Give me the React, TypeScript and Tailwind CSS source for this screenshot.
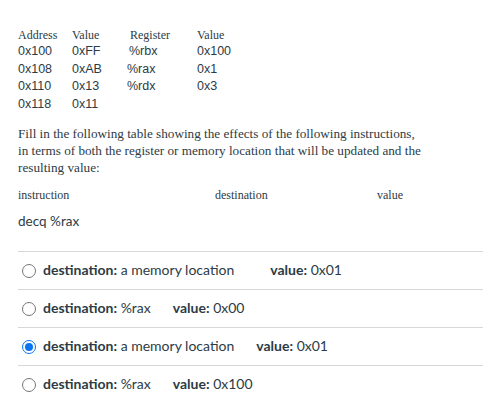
const memRows = [
  ['0x100', '0xFF', '%rbx', '0x100'],
  ['0x108', '0xAB', '%rax', '0x1'],
  ['0x110', '0x13', '%rdx', '0x3'],
  ['0x118', '0x11', '', ''],
]

const options = [
  { dest: 'a memory location', value: '0x01', gap: 'ml-[36px]', checked: false },
  { dest: '%rax', value: '0x00', gap: 'ml-[22px]', checked: false },
  { dest: 'a memory location', value: '0x01', gap: 'ml-[22px]', checked: true },
  { dest: '%rax', value: '0x100', gap: 'ml-[22px]', checked: false },
]

const Radio = ({ checked }: { checked: boolean }) =>
  checked ? (
    <span className="w-[14px] h-[14px] rounded-full border-[1.5px] border-[#0b74f1] flex items-center justify-center shrink-0">
      <span className="w-[8px] h-[8px] rounded-full bg-[#0b74f1]" />
    </span>
  ) : (
    <span className="w-[14px] h-[14px] rounded-full border border-[#767676] shrink-0" />
  )

export default function App() {
  return (
    <div className="bg-white min-h-screen w-[492px] h-[419px] px-[18px] pt-[28px] text-[#2d3b45]">
      <table className="border-collapse">
        <thead>
          <tr className="font-['Liberation_Serif',serif] text-[12px] h-[15px] leading-[15px]">
            <th className="w-[54px] text-left font-normal p-0">Address</th>
            <th className="w-[57px] text-left font-normal p-0">Value</th>
            <th className="w-[68px] text-left font-normal p-0 pl-[1px]">Register</th>
            <th className="text-left font-normal p-0">Value</th>
          </tr>
        </thead>
        <tbody className="font-['Liberation_Sans',Arial,sans-serif] text-[12.5px]">
          {memRows.map((r, i) => (
            <tr key={i} className="h-[17.5px] leading-[17.5px]">
              <td className="p-0">{r[0]}</td>
              <td className="p-0">{r[1]}</td>
              <td className={i === 0 ? 'p-0' : 'p-0 -translate-x-[2px]'}>{r[2]}</td>
              <td className="p-0">{r[3]}</td>
            </tr>
          ))}
        </tbody>
      </table>

      <p className="font-['Liberation_Serif',serif] text-[13.2px] leading-[17px] mt-[12px] whitespace-nowrap">
        Fill in the following table showing the effects of the following instructions,
        <br />
        in terms of both the register or memory location that will be updated and the
        <br />
        resulting value:
      </p>

      <div className="flex font-['Liberation_Serif',serif] text-[12px] leading-[15px] mt-[12px]">
        <span className="w-[197px]">instruction</span>
        <span className="w-[162px]">destination</span>
        <span>value</span>
      </div>
      <div className="font-['Lato',sans-serif] text-[13.5px] leading-[17px] mt-[10px]">decq %rax</div>

      <div className="mt-[21px] w-[465px] font-['Lato',sans-serif] text-[14px]">
        {options.map((o, i) => (
          <div key={i} className="border-t border-[#d7d7d7] h-[38px] flex items-center pl-[4px]">
            <Radio checked={o.checked} />
            <span className="ml-[7px] -translate-y-[1px]">
              <span className="font-bold">destination:</span> {o.dest}
            </span>
            <span className={`${o.gap} -translate-y-[1px]`}>
              <span className="font-bold">value:</span> {o.value}
            </span>
          </div>
        ))}
      </div>
    </div>
  )
}
